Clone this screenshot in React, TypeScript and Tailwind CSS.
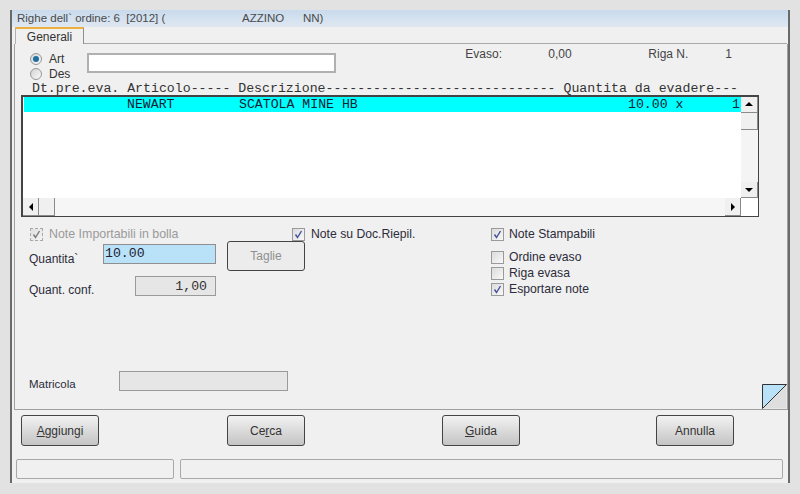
import React from 'react';

const sans = "font-['Liberation_Sans',Arial,sans-serif]";
const mono = "font-['Liberation_Mono','Courier_New',monospace]";

const Check: React.FC<{ checked?: boolean; disabled?: boolean }> = ({ checked, disabled }) => (
  <span
    className={`flex h-[13px] w-[13px] shrink-0 items-center justify-center border bg-gradient-to-br ${
      disabled ? 'border-dashed border-[#a8a8a8] from-[#e0e0e0] to-[#f4f4f4]' : 'border-[#9a9a9a] from-[#dcdcdc] to-[#f8f8f8]'
    }`}
  >
    {checked && (
      <svg width="9" height="9" viewBox="0 0 9 9">
        <path d="M1.5 4.5 L3.5 7.5 L7.5 1" fill="none" stroke={disabled ? '#777' : '#44509a'} strokeWidth="1.4" />
      </svg>
    )}
  </span>
);

const Radio: React.FC<{ checked?: boolean }> = ({ checked }) => (
  <span className="flex h-[12px] w-[12px] shrink-0 items-center justify-center rounded-full border border-[#979797] bg-gradient-to-br from-[#d4d4d4] to-[#fafafa]">
    {checked && <span className="h-[6px] w-[6px] rounded-full bg-[#1f6f9f]" />}
  </span>
);

const CheckRow: React.FC<{ label: string; checked?: boolean; className?: string }> = ({ label, checked, className }) => (
  <div className={`flex h-[16px] items-center gap-[5px] text-[12.2px] text-[#2c2c3a] ${className ?? ''}`}>
    <Check checked={checked} />
    <span>{label}</span>
  </div>
);

const Btn: React.FC<{ children: React.ReactNode; className?: string }> = ({ children, className }) => (
  <div
    className={`flex h-[31px] w-[78px] items-center justify-center rounded-[3px] border border-[#444] bg-gradient-to-b from-[#f2f2f2] to-[#c4c4c4] text-[12px] text-[#333] ${className ?? ''}`}
  >
    {children}
  </div>
);

const ArrowBtn: React.FC<{ dir: 'up' | 'down' | 'left' | 'right'; className?: string }> = ({ dir, className }) => {
  const pts = { up: '1,6 9,6 5,2', down: '1,3 9,3 5,7', left: '7,1 7,9 3,5', right: '3,1 3,9 7,5' }[dir];
  return (
    <div className={`flex items-center justify-center border-r border-b border-[#8a8a8a] bg-[#f0f0f0] ${className ?? ''}`}>
      <svg width="10" height="10" viewBox="0 0 10 10">
        <polygon points={pts} fill="#000" />
      </svg>
    </div>
  );
};

const App: React.FC = () => {
  return (
    <div className={`h-[494px] w-[800px] overflow-hidden bg-[#e2e2e2] pt-[10px] pl-[10px] ${sans}`}>
      <div className="flex h-[473px] w-[780px] flex-col border-r-2 border-l-2 border-[#6a6a6a] bg-[#f0f0f0]">
        {/* title bar */}
        <div className="flex h-[17px] items-center bg-gradient-to-b from-[#c9daec] to-[#dfe8f2] pl-[5px] text-[11.5px] text-[#4a4a4a]">
          <span className="w-[225px] whitespace-pre">Righe dell` ordine: 6  [2012] (</span>
          <span className="w-[61px]">AZZINO</span>
          <span>NN)</span>
        </div>

        {/* tab strip */}
        <div className="flex h-[17px] pl-[3px]">
          <div className="flex w-[69px] items-center justify-center border-t-2 border-r border-l border-t-[#f0b040] border-r-[#8f8f8f] border-l-[#b0b0b0] text-[12px] text-[#333]">
            Generali
          </div>
          <div className="mr-[1px] flex-1 border-b border-[#a9a9a9]" />
        </div>

        {/* panel */}
        <div className="relative ml-[2px] flex h-[366px] w-[774px] flex-col border-r border-b border-l border-[#a0a0a0]">
          <div className="flex h-[29px] pt-[4px] pl-[15px]">
            <div className="flex flex-col pt-[2px]">
              <div className="flex h-[15px] items-center gap-[7px] pt-[2px] text-[12px] text-[#333]">
                <Radio checked />
                <span>Art</span>
              </div>
              <div className="flex h-[15px] items-center gap-[7px] pt-[2px] text-[12px] text-[#333]">
                <Radio />
                <span>Des</span>
              </div>
            </div>
            <div className="mt-[5px] ml-[17px] h-[20px] w-[249px] border-2 border-[#b0b0b0] bg-white" />
            <div className="ml-[129px] flex h-[12px] text-[12px] leading-[12px] text-[#444]">
              <span className="w-[83px]">Evaso:</span>
              <span className="w-[100px]">0,00</span>
              <span className="w-[77px]">Riga N.</span>
              <span>1</span>
            </div>
          </div>

          <div className={`mt-[9px] h-[13px] whitespace-pre pl-[17px] text-[13.22px] leading-[13px] text-[#333] ${mono}`}>
            {'Dt.pre.eva. Articolo----- Descrizione----------------------------- Quantita da evadere---'}
          </div>

          {/* list */}
          <div className="ml-[6px] flex h-[122px] w-[738px] flex-col border-t-2 border-r border-b border-l-2 border-[#444] bg-white">
            <div className="flex h-[101px]">
              <div className="flex-1 pl-[1px]">
                <div className={`flex h-[15px] items-center whitespace-pre bg-[#00ffff] text-[13.2px] text-[#123] ${mono}`}>
                  <span className="w-[103px]" />
                  <span className="w-[112px]">NEWART</span>
                  <span className="w-[389px]">SCATOLA MINE HB</span>
                  <span className="w-[65px]">10.00 x</span>
                  <span className="flex-1 pr-[1px] text-right">1</span>
                </div>
              </div>
              <div className="flex w-[17px] flex-col bg-[#f4f4f4]">
                <ArrowBtn dir="up" className="h-[16px]" />
                <div className="h-[17px] border-r border-b border-[#8a8a8a] bg-[#f0f0f0]" />
                <div className="flex-1" />
                <ArrowBtn dir="down" className="h-[16px]" />
              </div>
            </div>
            <div className="flex h-[18px] bg-[#f6f6f6]">
              <ArrowBtn dir="left" className="w-[16px]" />
              <div className="w-[16px] border-r border-b border-[#8a8a8a] bg-[#f0f0f0]" />
              <div className="flex-1" />
              <ArrowBtn dir="right" className="w-[16px]" />
              <div className="w-[17px] bg-white" />
            </div>
          </div>

          {/* note checks */}
          <div className="mt-[9px] flex h-[15px] pl-[15px]">
            <div className="flex w-[262px] items-center gap-[6px] pt-[1px] text-[12.4px] text-[#9a9a9a]">
              <Check checked disabled />
              <span>Note Importabili in bolla</span>
            </div>
            <CheckRow label="Note su Doc.Riepil." checked className="w-[199px] gap-[6px]" />
            <CheckRow label="Note Stampabili" checked />
          </div>

          {/* quantity block */}
          <div className="flex pl-[14px]">
            <div className="flex w-[448px] flex-col">
              <div className="flex">
                <div className="flex h-[28px] w-[74px] items-end text-[12px] leading-[20px] text-[#2c2c3a]">Quantita`</div>
                <div className={`mt-[3px] h-[20px] w-[113px] border border-[#8f8f8f] bg-[#b9e1f8] pl-[1px] text-[13.2px] leading-[18px] text-[#223] ${mono}`}>10.00</div>
                <div className="ml-[11px] flex h-[30px] w-[78px] items-center justify-center rounded-[3px] border border-[#444] bg-[#ececec] text-[12px] text-[#8f8f8f]">Taglie</div>
              </div>
              <div className="mt-[5px] flex">
                <div className="flex h-[20px] w-[106px] items-center pt-[8px] text-[12px] text-[#2c2c3a]">Quant. conf.</div>
                <div className={`h-[20px] w-[81px] border border-[#9a9a9a] bg-[#e6e6e6] pr-[8px] text-right text-[13.2px] leading-[20px] text-[#333] ${mono}`}>1,00</div>
              </div>
            </div>
            <div className="ml-[14px] flex flex-col pt-[8px]">
              <CheckRow label="Ordine evaso" />
              <CheckRow label="Riga evasa" />
              <CheckRow label="Esportare note" checked />
            </div>
          </div>

          {/* matricola */}
          <div className="mt-[74px] flex h-[20px] pl-[14px]">
            <div className="w-[90px] pt-[5px] text-[11.5px] leading-[16px] text-[#2c2c3a]">Matricola</div>
            <div className="h-[20px] w-[169px] border border-[#9a9a9a] bg-[#e6e6e6]" />
          </div>

          {/* corner page fold */}
          <svg className="absolute right-0 bottom-0" width="25" height="25" viewBox="0 0 25 25">
            <polygon points="0.5,0.5 24.5,0.5 0.5,24.5" fill="#b9e1f8" />
            <polygon points="24.5,0.5 24.5,24.5 0.5,24.5" fill="#dedede" />
            <path d="M0.5 24.5 V0.5 H24.5 L0.5 24.5" fill="none" stroke="#333" strokeWidth="1" />
          </svg>
        </div>

        {/* action buttons */}
        <div className="mt-[5px] flex pl-[9px]">
          <Btn>
            <span><u>A</u>ggiungi</span>
          </Btn>
          <Btn className="ml-[128px]">
            <span>Ce<u>r</u>ca</span>
          </Btn>
          <Btn className="ml-[137px]">
            <span><u>G</u>uida</span>
          </Btn>
          <Btn className="ml-[136px]">Annulla</Btn>
        </div>

        {/* status bar */}
        <div className="mt-[13px] flex gap-[6px] pl-[4px]">
          <div className="h-[20px] w-[158px] rounded-[2px] border border-[#a8a8a8]" />
          <div className="h-[20px] w-[603px] rounded-[2px] border border-[#a8a8a8]" />
        </div>
      </div>
    </div>
  );
};

export default App;
